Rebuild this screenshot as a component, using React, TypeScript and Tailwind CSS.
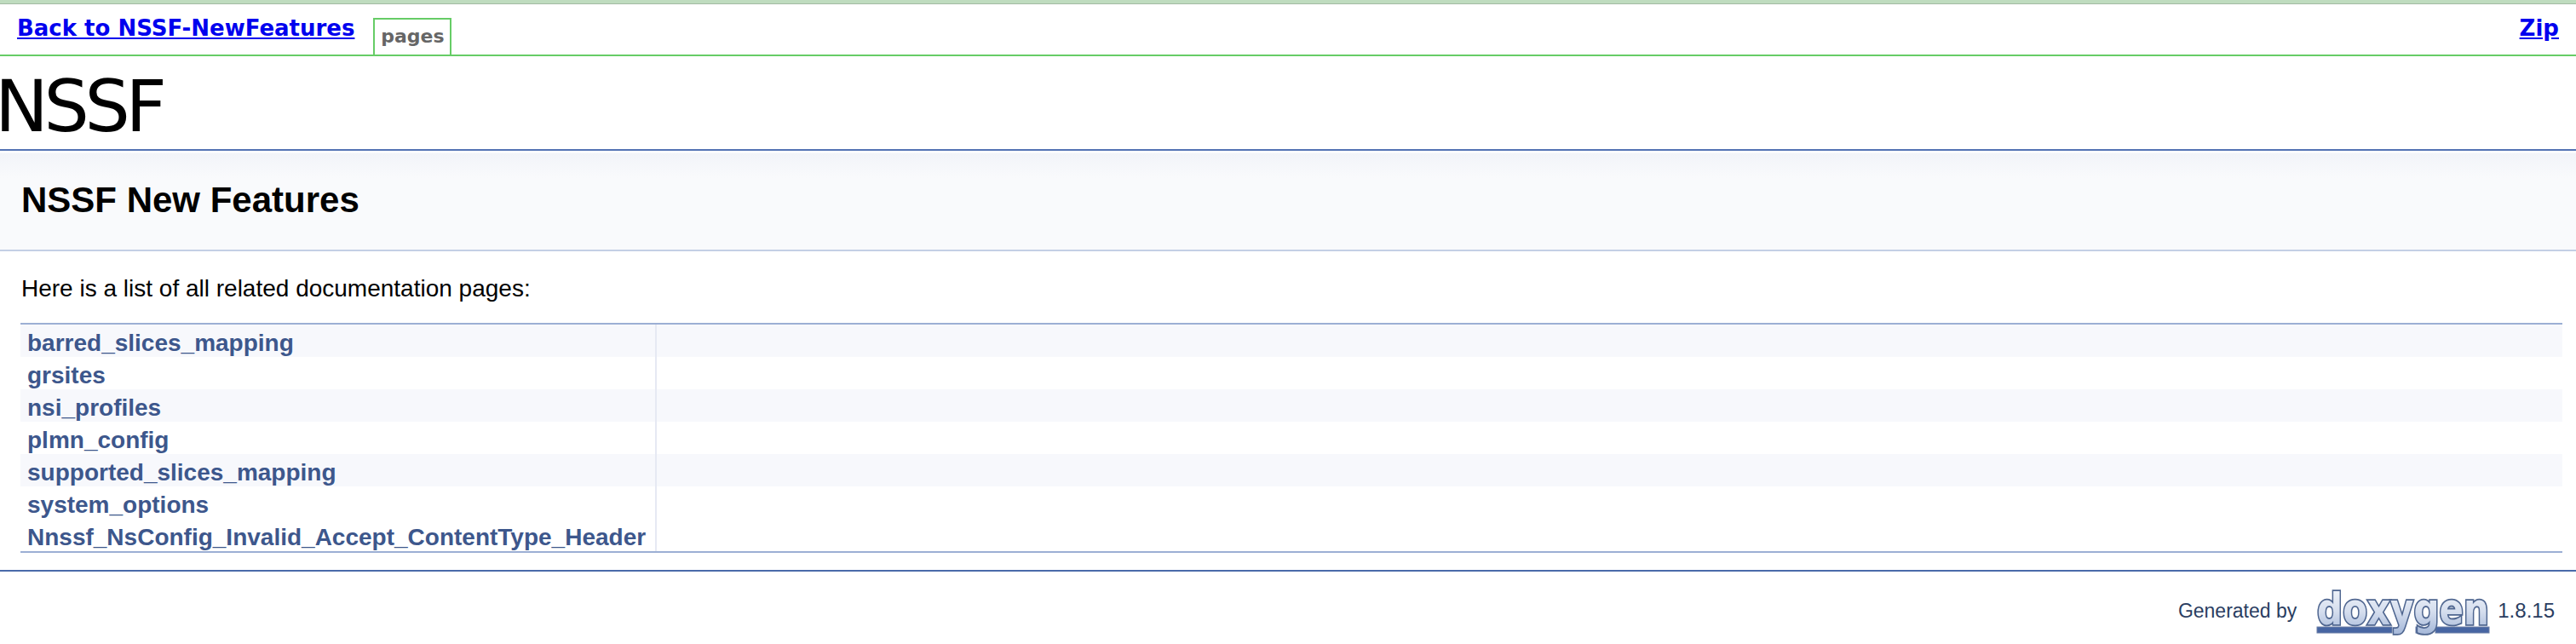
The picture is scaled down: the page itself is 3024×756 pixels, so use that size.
const pages = [
  'barred_slices_mapping',
  'grsites',
  'nsi_profiles',
  'plmn_config',
  'supported_slices_mapping',
  'system_options',
  'Nnssf_NsConfig_Invalid_Accept_ContentType_Header',
];

// rows 1, 3 and 5 are tinted, the last two rows are both white
const tinted = [true, false, true, false, true, false, false];

function DoxygenLogo() {
  return (
    <svg width="206" height="58" viewBox="0 0 206 58" className="block">
      <defs>
        <linearGradient id="doxFill" x1="0" y1="0" x2="0" y2="1">
          <stop offset="0" stopColor="#f6f8fc" />
          <stop offset="0.55" stopColor="#d5deee" />
          <stop offset="1" stopColor="#a3b6d8" />
        </linearGradient>
        <filter id="doxSoft" x="-5%" y="-5%" width="110%" height="110%">
          <feGaussianBlur stdDeviation="0.6" />
        </filter>
      </defs>
      <g filter="url(#doxSoft)">
        <rect x="2" y="46" width="88" height="7" fill="#4665a2" stroke="#6b7fa6" strokeWidth="1" />
        <rect x="118" y="46" width="8" height="7" fill="#4665a2" stroke="#6b7fa6" strokeWidth="1" />
        <rect x="141" y="46" width="63" height="7" fill="#4665a2" stroke="#6b7fa6" strokeWidth="1" />
        <text
          transform="translate(103 43) scale(1 1.24)"
          textAnchor="middle"
          fontFamily="'DejaVu Sans', sans-serif"
          fontWeight="700"
          fontSize="42"
          fill="url(#doxFill)"
          stroke="#4f6690"
          strokeWidth="3"
          paintOrder="stroke"
        >
          doxygen
        </text>
      </g>
    </svg>
  );
}

export default function App() {
  return (
    <div className="h-[756px] w-[3024px] overflow-hidden bg-white font-['Liberation_Sans',Arial,sans-serif] text-black">
      <div className="h-[5px] border-b border-[#a3bba3] bg-[#bfdcbf]" />

      <div className="flex h-[61px] border-b-2 border-[#66cc66] font-['DejaVu_Sans',sans-serif]">
        <a href="#" className="mt-[10px] ml-[20px] text-[26px] leading-[36px] font-bold text-[#0000ee] underline">
          Back to NSSF-NewFeatures
        </a>
        <div className="mt-[16px] ml-[22px] h-[43px] w-[92px] border-2 border-b-0 border-[#66cc66] text-center text-[22px] leading-[40px] font-bold text-[#666666]">
          pages
        </div>
        <a href="#" className="mt-[10px] mr-[20px] ml-auto text-[26px] leading-[36px] font-bold text-[#0000ee] underline">
          Zip
        </a>
      </div>

      <h1 className="-ml-[6px] h-[109px] pt-[9px] font-['DejaVu_Sans',sans-serif] text-[84px] leading-[100px] font-normal tracking-[-5.3px]">
        NSSF
      </h1>

      <div className="h-[120px] border-t-2 border-b-2 border-t-[#5373b4] border-b-[#c4cfe5] bg-[linear-gradient(#ffffff_2px,#f2f4f9_3px,#f9fafc_32px)] pl-[25px]">
        <div className="pt-[33px] text-[42px] leading-[50px] font-bold">NSSF New Features</div>
      </div>

      <p className="mt-[26px] ml-[25px] text-[28px] leading-[36px]">Here is a list of all related documentation pages:</p>

      <div className="mt-[22px] mr-[16px] ml-[24px] border-t-2 border-b-2 border-[#9cafd4]">
        {pages.map((page, i) => (
          <div key={page} className={`flex h-[38px] ${tinted[i] ? 'bg-[#f7f8fc]' : 'bg-white'}`}>
            <div className="w-[747px] border-r-2 border-[#e6e9f3] pt-[5px] pl-[8px] text-[28px] leading-[33px] font-bold text-[#3d578c]">
              {page}
            </div>
          </div>
        ))}
      </div>

      <div className="mt-[20px] border-t-2 border-[#4a6aaa]" />

      <div className="mt-[19px] flex items-start justify-end pr-[25px] text-[#2a3d61]">
        <span className="mt-[13px] text-[23px] leading-[28px]">Generated by</span>
        <span className="mr-[8px] ml-[22px]">
          <DoxygenLogo />
        </span>
        <span className="mt-[13px] text-[24px] leading-[28px]">1.8.15</span>
      </div>
    </div>
  );
}
